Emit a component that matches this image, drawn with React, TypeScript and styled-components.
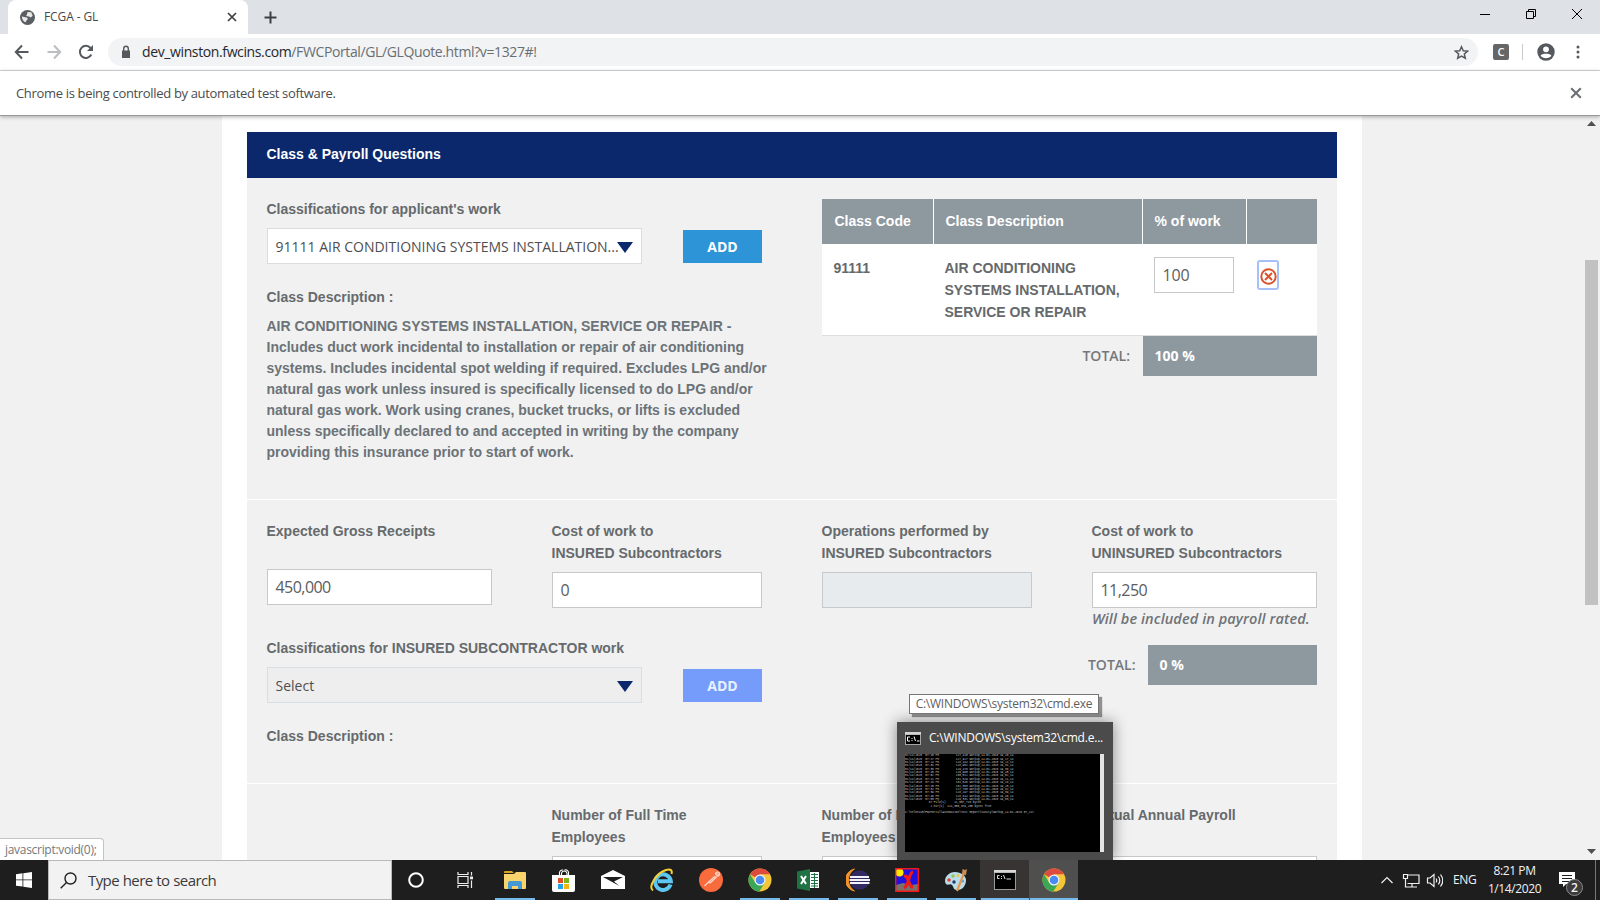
import React from "react";
import styled, { createGlobalStyle, css } from "styled-components";

const Global = createGlobalStyle`
  * { box-sizing: border-box; }
  body { margin: 0; overflow: hidden; font-family: "Liberation Sans", Arial, sans-serif; }
`;
const SANS = `"Open Sans", "Noto Sans", sans-serif`;

const Screen = styled.div`
  position: relative;
  width: 1600px;
  height: 900px;
  display: flex;
  flex-direction: column;
  background: #f1f1f1;
  overflow: hidden;
`;

/* ---------- browser chrome ---------- */
const TabStrip = styled.div`
  flex: none;
  height: 34px;
  background: #dee1e6;
  display: flex;
  align-items: stretch;
  padding-left: 8px;
`;
const Tab = styled.div`
  width: 240px;
  background: #fff;
  border-radius: 8px 8px 0 0;
  display: flex;
  align-items: center;
  padding: 0 11px 0 12px;
  font: 12px/16px ${SANS};
  color: #45494d;
`;
const TabTitle = styled.span`
  flex: 1;
  margin-left: 9px;
  letter-spacing: -0.1px;
`;
const NewTab = styled.div`
  width: 44px;
  display: flex;
  align-items: center;
  justify-content: center;
`;
const WindowButtons = styled.div`
  margin-left: auto;
  display: flex;
  width: 138px;
  align-items: flex-start;
  padding-top: 7px;
  svg { flex: 1; height: 14px; }
`;
const Toolbar = styled.div`
  flex: none;
  height: 37px;
  background: #fff;
  border-bottom: 1px solid #d5d7da;
  display: flex;
  align-items: center;
  padding: 0 16px 0 14px;
`;
const NavIcons = styled.div`
  display: flex;
  gap: 16px;
  margin-right: 14px;
`;
const Omnibox = styled.div`
  width: 1370px;
  height: 28px;
  border-radius: 14px;
  background: #f1f3f4;
  display: flex;
  align-items: center;
  padding: 0 9.5px 0 11px;
  font: 14px/20px ${SANS};
  color: #6a6e73;
`;
const Url = styled.span`
  flex: 1;
  margin-left: 9px;
  letter-spacing: -0.38px;
  b { font-weight: 400; color: #26282b; }
`;
const ExtIcon = styled.div`
  margin-left: 15px;
  width: 16px;
  height: 16px;
  border-radius: 2px;
  background: #666;
  color: #fff;
  font: 600 11px/16px ${SANS};
  text-align: center;
`;
const ToolDivider = styled.div`
  width: 1px;
  height: 16px;
  margin: 0 14px 0 13px;
  background: #c9cbce;
`;
const Menu = styled.svg`
  margin-left: auto;
`;
const InfoBar = styled.div`
  flex: none;
  position: relative;
  z-index: 2;
  height: 45px;
  background: #fff;
  border-bottom: 1px solid #999;
  box-shadow: 0 1px 4px rgba(0, 0, 0, 0.3);
  display: flex;
  align-items: center;
  justify-content: space-between;
  padding: 0 18px 0 16px;
  font: 13px/18px ${SANS};
  letter-spacing: -0.33px;
  color: #4b4b4d;
`;

/* ---------- page ---------- */
const Viewport = styled.div`
  flex: 1;
  min-height: 0;
  display: flex;
  overflow: hidden;
`;
const Gutter = styled.div`
  width: 222px;
  flex: none;
`;
const Sheet = styled.main`
  width: 1140px;
  flex: none;
  background: #fff;
  padding: 16px 25px 0;
`;
const Banner = styled.h2`
  margin: 0;
  height: 46px;
  padding: 0 19.5px;
  background: #0a286b;
  color: #fff;
  font: bold 14px/44px "Liberation Sans", Arial, sans-serif;
`;
const Section = styled.section<{ $h: number }>`
  height: ${(p) => p.$h}px;
  background: #f1f1f1;
  border-bottom: 1px solid #fff;
  padding: 0 20px;
  display: flex;
  flex-direction: column;
`;
const Split = styled.div<{ $top: number }>`
  display: flex;
  justify-content: space-between;
  padding-top: ${(p) => p.$top}px;
`;
const ClassColumn = styled.div`
  width: 506px;
`;
const Label = styled.div<{ $gap?: number }>`
  font-size: 14px;
  font-weight: bold;
  line-height: 22px;
  color: #666a6d;
  white-space: pre-line;
  margin-left: -0.5px;
  margin-bottom: ${(p) => p.$gap ?? 8}px;
`;
const PickRow = styled.div`
  display: flex;
  align-items: center;
  gap: 41px;
  margin-bottom: 22px;
`;
const Select = styled.div<{ $off?: boolean }>`
  width: 375px;
  height: 36px;
  border: 1px solid ${(p) => (p.$off ? "#d9dee2" : "#dcdcdc")};
  background: ${(p) => (p.$off ? "#eee" : "#fff")};
  color: #4e4e50;
  font: 14px/34px ${SANS};
  padding: 1px 8px 0 7.5px;
  display: flex;
  align-items: center;
  justify-content: space-between;
  white-space: nowrap;
`;
const Picked = styled.span`
  flex: 1;
  min-width: 0;
`;
const Caret = styled.span`
  flex: none;
  margin-top: 2px;
  border: 8px solid transparent;
  border-top: 11px solid #0a286b;
  border-bottom: 0;
`;
const AddButton = styled.div<{ $off?: boolean }>`
  width: 79px;
  height: 33px;
  margin-top: 1px;
  background: ${(p) => (p.$off ? "#769cfb" : "#2d94d8")};
  color: ${(p) => (p.$off ? "#e9f0ff" : "#fff")};
  font: 700 14px/33px ${SANS};
  text-align: center;
`;
const Description = styled.p`
  margin: 0 0 0 -0.5px;
  font-size: 14px;
  font-weight: bold;
  line-height: 21px;
  color: #6c7378;
  white-space: pre;
`;
const Table = styled.div`
  width: 495px;
  display: grid;
  grid-template-columns: 112px 209px 104px 70px;
  align-self: flex-start;
  margin-top: 1px;
`;
const Head = styled.div<{ $last?: boolean }>`
  height: 45px;
  background: #8e989f;
  border-right: ${(p) => (p.$last ? "0" : "1px solid #fff")};
  color: #fff;
  font-size: 14px;
  font-weight: bold;
  line-height: 45px;
  padding-left: 11.5px;
  &:first-child { padding-left: 12.5px; }
`;
const Cell = styled.div<{ $left?: number; $top?: number }>`
  height: 92px;
  background: #fff;
  border-bottom: 1px solid #ddd;
  color: #66696b;
  font-size: 14px;
  font-weight: bold;
  line-height: 22px;
  padding: ${(p) => p.$top ?? 13}px 0 0 ${(p) => p.$left ?? 11}px;
  white-space: pre;
`;
const Input = styled.div<{ $w: number; $off?: boolean; $tight?: boolean }>`
  width: ${(p) => p.$w}px;
  height: 36px;
  border: 1px solid ${(p) => (p.$off ? "#c6cacd" : "#c6c8ca")};
  background: ${(p) => (p.$off ? "#e7ebee" : "#fff")};
  font: 16px/34px ${SANS};
  letter-spacing: ${(p) => (p.$tight ? "-0.55px" : "-0.1px")};
  color: #5b5d60;
  padding: 0 7.5px;
`;
const RemoveBox = styled.div`
  width: 22px;
  height: 30px;
  border: 2px solid #a6c1fa;
  border-radius: 3px;
  display: flex;
  align-items: center;
  justify-content: center;
  padding-top: 3px;
`;
const TotalText = styled.div<{ $span?: boolean }>`
  ${(p) => p.$span && "grid-column: span 2;"}
  text-align: right;
  padding-right: ${(p) => (p.$span ? 13 : 12.5)}px;
  font: 600 14px/40px ${SANS};
  color: #74787c;
`;
const TotalBox = styled.div<{ $span?: boolean; $w?: number }>`
  ${(p) => p.$span && "grid-column: span 2;"}
  ${(p) => p.$w && `width: ${p.$w}px;`}
  height: 40px;
  background: #8e989f;
  color: #fff;
  font: 700 14px/40px ${SANS};
  padding-left: 11.5px;
`;
const Fields = styled.div<{ $top: number }>`
  display: grid;
  grid-template-columns: 285px 270px 270px 225px;
  padding-top: ${(p) => p.$top}px;
`;
const Note = styled.div`
  font: italic 600 14.5px/21px ${SANS};
  letter-spacing: 0.09px;
  color: #6f7377;
  white-space: nowrap;
`;
const Bottom = styled.div<{ $top: number }>`
  display: flex;
  justify-content: space-between;
  margin-top: ${(p) => p.$top}px;
`;
const TotalRow = styled.div`
  display: flex;
  margin-top: 8px;
`;
const ScrollBar = styled.div`
  width: 17px;
  margin-left: auto;
  background: #f1f1f1;
  display: flex;
  flex-direction: column;
  align-items: center;
  justify-content: space-between;
  padding: 5px 0 6px;
`;
const Thumb = styled.div`
  width: 13px;
  height: 345px;
  margin-bottom: 110px;
  background: #c1c1c1;
`;

/* ---------- overlays ---------- */
const Status = styled.div`
  position: absolute;
  left: 0;
  top: 838px;
  width: 104px;
  height: 22px;
  background: #fff;
  border: 1px solid #c4c4c4;
  border-width: 1px 1px 0 0;
  border-radius: 0 4px 0 0;
  padding-left: 5px;
  font: 12px/22px ${SANS};
  letter-spacing: -0.3px;
  color: #75787b;
`;
const Tooltip = styled.div`
  position: absolute;
  left: 909px;
  top: 694px;
  width: 190px;
  height: 20px;
  border: 1px solid #767676;
  background: #fff;
  box-shadow: 3px 3px 1px rgba(0, 0, 0, 0.4);
  font: 12px/18px ${SANS};
  letter-spacing: -0.25px;
  color: #606060;
  text-align: center;
  white-space: nowrap;
`;
const Preview = styled.div`
  position: absolute;
  left: 897px;
  top: 722px;
  width: 216px;
  height: 138px;
  background: #4b4b4b;
  box-shadow: 0 0 14px rgba(0, 0, 0, 0.45);
  padding: 0 8px;
`;
const PreviewTitle = styled.div`
  height: 32px;
  display: flex;
  align-items: center;
  gap: 8px;
  color: #fff;
  font: 12px/32px ${SANS};
  letter-spacing: -0.21px;
  white-space: nowrap;
`;
const Console = styled.div`
  position: relative;
  width: 199px;
  height: 98px;
  background: #000;
  border-right: 4px solid #e4e4e4;
  overflow: hidden;
`;
const ConsoleText = styled.pre`
  margin: 0;
  width: 800px;
  transform: scale(0.25);
  transform-origin: 0 0;
  color: #c8c8c8;
  font: 11.3px/13.4px "Liberation Mono", monospace;
`;

/* ---------- taskbar ---------- */
const Taskbar = styled.div`
  position: relative;
  z-index: 3;
  flex: none;
  height: 40px;
  background: #1e1e1e;
  display: flex;
`;
const Start = styled.div`
  width: 48px;
  display: flex;
  align-items: center;
  justify-content: center;
`;
const Search = styled.div`
  width: 344px;
  background: #f2f2f2;
  border: 1px solid #b8b8b8;
  display: flex;
  align-items: center;
  padding-left: 11px;
  gap: 11px;
  font: 15px/38px ${SANS};
  letter-spacing: -0.6px;
  word-spacing: 0.5px;
  color: #3a3a3c;
`;
const TaskItem = styled.div<{ $bg?: string; $line?: "short" | "full" }>`
  width: 49px;
  display: flex;
  align-items: center;
  justify-content: center;
  background-color: ${(p) => p.$bg ?? "transparent"};
  ${(p) =>
    p.$line &&
    css`
      background-image: linear-gradient(#76b9ed, #76b9ed);
      background-repeat: no-repeat;
      background-position: center bottom;
      background-size: ${p.$line === "full" ? "48px" : "40px"} 2px;
    `}
`;
const Tray = styled.div`
  margin-left: auto;
  display: flex;
  align-items: center;
  color: #f2f2f2;
  font: 12px/18px ${SANS};
`;
const Lang = styled.span`
  width: 42px;
  padding-left: 10px;
  letter-spacing: -0.3px;
`;
const Clock = styled.div`
  width: 59px;
  text-align: center;
  letter-spacing: -0.4px;
`;
const Notices = styled.div`
  position: relative;
  width: 52px;
  height: 40px;
  padding: 12px 0 0 15px;
  border-right: 1px solid #777;
  margin-right: 4px;
`;
const Count = styled.span`
  position: absolute;
  left: 22px;
  top: 19px;
  width: 17px;
  height: 17px;
  border-radius: 50%;
  border: 1px solid #8a8a8a;
  background: #3b3b3b;
  font: 600 12px/15px ${SANS};
  text-align: center;
`;

const Cross = ({ s, w, c }: { s: number; w: number; c: string }) => (
  <svg width={s} height={s} viewBox="0 0 10 10" stroke={c} strokeWidth={w}>
    <path d="M1 1l8 8M9 1l-8 8" />
  </svg>
);
const Chrome = () => (
  <svg width="24" height="24" viewBox="0 0 24 24">
    <circle cx="12" cy="12" r="11.5" fill="#f3c637" />
    <path d="M12 12L2 6.2A11.5 11.5 0 0 1 22 6.3H12z" fill="#dd4b3e" />
    <path d="M2 6.2A11.5 11.5 0 0 0 11.3 23.5L16.8 14.5 12 12 7.3 14.7z" fill="#3aa757" />
    <circle cx="12" cy="12" r="5.5" fill="#f4f4f4" />
    <circle cx="12" cy="12" r="4.3" fill="#4a8af4" />
  </svg>
);
const Cmd = () => (
  <svg width="22" height="20" viewBox="0 0 22 20">
    <path d="M0 0h22v20H0z" fill="#9a9a9a" />
    <path d="M0 0h22v2.500H0z" fill="#d8d8d8" />
    <path d="M1 3h20v16H1z" fill="#000" />
    <path d="M5.500 5.500H3.500V8.500H5.500M7.500 6v1M7.500 8v1M9.500 5l1.500 4M12.500 9h4.500" stroke="#ddd" fill="none" />
  </svg>
);
const SmallCmd = () => (
  <svg width="16" height="13" viewBox="0 0 16 13">
    <path d="M0 0h16v13H0z" fill="#a5a5a5" />
    <path d="M0 0h16v2.500H0z" fill="#d4d4d4" />
    <path d="M1 3h14v9H1z" fill="#000" />
    <path d="M5 5H2.500v4H5M7 6v1M7 8v1M9 4.500l1.500 4.500M12 9h2.500" stroke="#fff" fill="none" />
  </svg>
);

const consoleRows = Array.from({ length: 14 }, (_, i) => {
  const n = 127410 + ((i * 5317) % 4800);
  const t = String(10 + ((i * 7) % 48));
  return `01/14/2020  07:${t} PM          ${String(n).replace(/(...)$/, ",$1")} Workup_14-01-2020 19_${t}_14`;
}).join("\n");
const consoleTail = `
              87 File(s)     11,067,710 bytes
               2 Dir(s)  124,355,379,200 bytes free

C:\\Selenium\\FWCPortal\\Automation\\Test Report\\Sanity\\Workup_14-01-2020 07_21>`;

export default function App() {
  return (
    <Screen>
      <Global />
      <TabStrip>
        <Tab>
          <svg width="15" height="15" viewBox="0 0 16 16">
            <circle cx="8" cy="8" r="8" fill="#5a5e63" />
            <path d="M2 7c2 0 3 1 5 1 1 0 2 2 0 3l-1 2c-2 0-4-3-4-6zM8 2l4 .5 1.500 3.500-2 2-2-1-3-.5 1-2z" fill="#e8e8e8" />
          </svg>
          <TabTitle>FCGA - GL</TabTitle>
          <Cross s={10} w={1.7} c="#3c4043" />
        </Tab>
        <NewTab>
          <svg width="13" height="13" viewBox="0 0 13 13" stroke="#3c4043" strokeWidth="2">
            <path d="M6.500 .5v12M.5 6.500h12" />
          </svg>
        </NewTab>
        <WindowButtons>
          <svg viewBox="0 0 14 14" stroke="#000"><path d="M2 7.500h10" /></svg>
          <svg viewBox="0 0 14 14" stroke="#000" fill="none"><path d="M2.500 4.500h7v7h-7zM4.500 4.500v-2h7v7h-2" /></svg>
          <svg viewBox="0 0 14 14" stroke="#000" fill="none"><path d="M2 2l10 10M12 2l-10 10" /></svg>
        </WindowButtons>
      </TabStrip>
      <Toolbar>
        <NavIcons>
          <svg width="16" height="16" viewBox="0 0 16 16" fill="none" stroke="#55595e" strokeWidth="2"><path d="M14.500 8H2M8 1.500L1.800 8 8 14.500" /></svg>
          <svg width="16" height="16" viewBox="0 0 16 16" fill="none" stroke="#bcbec1" strokeWidth="2"><path d="M1.500 8H14M8 1.500L14.200 8 8 14.500" /></svg>
          <svg width="16" height="16" viewBox="0 0 16 16" fill="none" stroke="#55595e" strokeWidth="2"><path d="M13.300 10.500A6 6 0 1 1 12.500 4" /><path d="M15 1v6H9z" fill="#55595e" stroke="none" /></svg>
        </NavIcons>
        <Omnibox>
          <svg width="14" height="14" viewBox="0 0 14 14"><path d="M3 5.500h8v7.500H3z" fill="#55595e" /><path d="M4.700 6V3.500a2.300 2.300 0 0 1 4.600 0V6" fill="none" stroke="#55595e" strokeWidth="1.400" /></svg>
          <Url><b>dev_winston.fwcins.com</b>/FWCPortal/GL/GLQuote.html?v=1327#!</Url>
          <svg width="15" height="15" viewBox="0 0 24 24" fill="none" stroke="#55595e" strokeWidth="2.400"><path d="M12 2.800l2.800 6.400 7 .6-5.300 4.600 1.600 6.800-6.100-3.600-6.100 3.600 1.600-6.800L2.200 9.800l7-.6z" /></svg>
        </Omnibox>
        <ExtIcon>C</ExtIcon>
        <ToolDivider />
        <svg width="18" height="18" viewBox="0 0 18 18"><circle cx="9" cy="9" r="8.700" fill="#55595e" /><circle cx="9" cy="6.300" r="2.900" fill="#fff" /><path d="M3.600 12.800c1-2.600 9.800-2.600 10.800 0-2 3.200-8.800 3.200-10.800 0z" fill="#fff" /></svg>
        <Menu width="12" height="14" viewBox="0 0 12 14" fill="#55595e"><circle cx="6" cy="2" r="1.500" /><circle cx="6" cy="7" r="1.500" /><circle cx="6" cy="12" r="1.500" /></Menu>
      </Toolbar>
      <InfoBar>
        <span>Chrome is being controlled by automated test software.</span>
        <Cross s={12} w={1.7} c="#6b6e72" />
      </InfoBar>

      <Viewport>
        <Gutter />
        <Sheet>
          <Banner>Class &amp; Payroll Questions</Banner>
          <Section $h={322}>
            <Split $top={20}>
              <ClassColumn>
                <Label>Classifications for applicant's work</Label>
                <PickRow>
                  <Select>
                    <Picked>91111 AIR CONDITIONING SYSTEMS INSTALLATION...</Picked>
                    <Caret />
                  </Select>
                  <AddButton>ADD</AddButton>
                </PickRow>
                <Label>Class Description :</Label>
                <Description>{`AIR CONDITIONING SYSTEMS INSTALLATION, SERVICE OR REPAIR -
Includes duct work incidental to installation or repair of air conditioning
systems. Includes incidental spot welding if required. Excludes LPG and/or
natural gas work unless insured is specifically licensed to do LPG and/or
natural gas work. Work using cranes, bucket trucks, or lifts is excluded
unless specifically declared to and accepted in writing by the company
providing this insurance prior to start of work.`}</Description>
              </ClassColumn>
              <Table>
                <Head>Class Code</Head>
                <Head>Class Description</Head>
                <Head>% of work</Head>
                <Head $last />
                <Cell $left={11.5}>91111</Cell>
                <Cell $left={10.5}>{"AIR CONDITIONING\nSYSTEMS INSTALLATION,\nSERVICE OR REPAIR"}</Cell>
                <Cell>
                  <Input $w={80}>100</Input>
                </Cell>
                <Cell $top={16} $left={10}>
                  <RemoveBox>
                    <svg width="17" height="17" viewBox="0 0 17 17" fill="none" stroke="#d9532c" strokeWidth="2"><circle cx="8.500" cy="8.500" r="7.200" /><path d="M5 5l7 7M12 5l-7 7" /></svg>
                  </RemoveBox>
                </Cell>
                <TotalText $span>TOTAL:</TotalText>
                <TotalBox $span>100 %</TotalBox>
              </Table>
            </Split>
          </Section>
          <Section $h={284}>
            <Fields $top={20}>
              <div>
                <Label $gap={27}>Expected Gross Receipts</Label>
                <Input $w={225} $tight>450,000</Input>
              </div>
              <div>
                <Label>{"Cost of work to\nINSURED Subcontractors"}</Label>
                <Input $w={210}>0</Input>
              </div>
              <div>
                <Label>{"Operations performed by\nINSURED Subcontractors"}</Label>
                <Input $w={210} $off />
              </div>
              <div>
                <Label>{"Cost of work to\nUNINSURED Subcontractors"}</Label>
                <Input $w={225} $tight>11,250</Input>
                <Note>Will be included in payroll rated.</Note>
              </div>
            </Fields>
            <Bottom $top={8}>
              <ClassColumn>
                <Label>Classifications for INSURED SUBCONTRACTOR work</Label>
                <PickRow>
                  <Select $off>
                    <Picked>Select</Picked>
                    <Caret />
                  </Select>
                  <AddButton $off>ADD</AddButton>
                </PickRow>
                <Label>Class Description :</Label>
              </ClassColumn>
              <TotalRow>
                <TotalText>TOTAL:</TotalText>
                <TotalBox $w={169}>0 %</TotalBox>
              </TotalRow>
            </Bottom>
          </Section>
          <Section $h={200}>
            <Fields $top={20}>
              <div />
              <div>
                <Label>{"Number of Full Time\nEmployees"}</Label>
                <Input $w={210} />
              </div>
              <div>
                <Label>{"Number of Part Time\nEmployees"}</Label>
                <Input $w={210} />
              </div>
              <div>
                <Label $gap={30}>Actual Annual Payroll</Label>
                <Input $w={225} />
              </div>
            </Fields>
          </Section>
        </Sheet>
        <ScrollBar>
          <svg width="9" height="5" viewBox="0 0 9 5"><path d="M4.500 0L9 5H0z" fill="#505050" /></svg>
          <Thumb />
          <svg width="9" height="5" viewBox="0 0 9 5"><path d="M4.500 5L0 0h9z" fill="#505050" /></svg>
        </ScrollBar>
      </Viewport>

      <Status>javascript:void(0);</Status>
      <Preview>
        <PreviewTitle>
          <SmallCmd />
          <span>C:\WINDOWS\system32\cmd.e...</span>
        </PreviewTitle>
        <Console>
          <ConsoleText>{consoleRows + consoleTail}</ConsoleText>
        </Console>
      </Preview>
      <Tooltip>C:\WINDOWS\system32\cmd.exe</Tooltip>

      <Taskbar>
        <Start>
          <svg width="16" height="16" viewBox="0 0 16 16" fill="#fff"><path d="M0 2.200L6.500 1.300V7.500H0zM7.300 1.200L16 0V7.500H7.300zM0 8.300h6.500v6.300L0 13.700zM7.300 8.300H16V16l-8.700-1.200z" /></svg>
        </Start>
        <Search>
          <svg width="17" height="17" viewBox="0 0 17 17" fill="none" stroke="#222" strokeWidth="1.400"><circle cx="10.500" cy="6.500" r="5.500" /><path d="M6.500 10.500L.7 16.300" /></svg>
          <span>Type here to search</span>
        </Search>
        <TaskItem>
          <svg width="17" height="16" viewBox="0 0 17 16"><circle cx="8" cy="8" r="6.800" fill="none" stroke="#fff" strokeWidth="2" /></svg>
        </TaskItem>
        <TaskItem>
          <svg width="17" height="16" viewBox="0 0 17 16" fill="none" stroke="#eee" strokeWidth="1.200"><path d="M1 0v2.500h10V0M1 16v-2.500h10V16M1 4.500h10v7H1zM14.500 0v3.500M14.500 8.500V16" /><path d="M13 4.500h3v2.800h-3z" fill="#eee" stroke="none" /></svg>
        </TaskItem>
        <TaskItem $line="short">
          <svg width="22" height="18" viewBox="0 0 22 18"><path d="M0 1q0-1 1-1h7l2 2H0z" fill="#d9a520" /><path d="M0 3h10l2-2h9q1 0 1 1v15q0 1-1 1H1q-1 0-1-1z" fill="#f9d36b" /><path d="M4 18v-6q0-2 2-2h10q2 0 2 2v6h-4v-3H8v3z" fill="#4299d6" /></svg>
        </TaskItem>
        <TaskItem>
          <svg width="23" height="23" viewBox="0 0 23 23"><path d="M7.500 7V4.500a3 3 0 0 1 3.500-3.500M9.500 7V4.500a2.800 3 0 0 1 5.500 0V7M12.500 1a3 3 0 0 1 4 3.500V7" fill="none" stroke="#fff" strokeWidth="1.100" /><path d="M0 6h23v15q0 2-2 2H2q-2 0-2-2z" fill="#fff" /><path d="M6 9h5v5H6z" fill="#e2502b" /><path d="M12 9h5v5h-5z" fill="#7cb518" /><path d="M6 15h5v5H6z" fill="#25a3e8" /><path d="M12 15h5v5h-5z" fill="#f5b80f" /></svg>
        </TaskItem>
        <TaskItem>
          <svg width="24" height="20" viewBox="0 0 24 20"><path d="M0 6L12 0l12 6v13H0z" fill="#fff" /><path d="M2 7h20l-9 4.500 5.500 4.500z" fill="#1e1e1e" /></svg>
        </TaskItem>
        <TaskItem>
          <svg width="24" height="24" viewBox="0 0 24 24"><path d="M20.500 16.500A7.800 7.800 0 1 1 20.800 13.300H8" fill="none" stroke="#5cc8f2" strokeWidth="4" /><path d="M3 22.500C-2 19 6 5 16 2c5-1.500 6.500.5 5.500 4" fill="none" stroke="#f5cf35" strokeWidth="2" /></svg>
        </TaskItem>
        <TaskItem>
          <svg width="24" height="24" viewBox="0 0 24 24"><circle cx="12" cy="12" r="12" fill="#f76b3c" /><path d="M5.500 18l3.500-3.500M9 14.500l6.500-6 2 .5-6 6zM16.500 6a2 2 0 1 1 2 2z" fill="#fbd9cb" fillOpacity=".5" stroke="#fbd9cb" strokeWidth="1.100" /></svg>
        </TaskItem>
        <TaskItem $line="short"><Chrome /></TaskItem>
        <TaskItem $line="short">
          <svg width="23" height="22" viewBox="0 0 23 22"><path d="M12 3h10v16H12z" fill="#fff" /><path d="M14 5.500h7M14 8.500h7M14 11.500h7M14 14.500h7M14 17h7M17.500 4v15" stroke="#217346" strokeWidth="1.100" /><path d="M0 2.500L13 0v22L0 19.500z" fill="#1f7244" /><path d="M4 7l5 8M9 7l-5 8" stroke="#fff" strokeWidth="2" /></svg>
        </TaskItem>
        <TaskItem $line="short">
          <svg width="24" height="24" viewBox="0 0 24 24"><path d="M8.500 1A11.200 11.200 0 0 0 8.500 23 13 13 0 0 1 8.500 1z" fill="#f0932b" stroke="#f0932b" /><circle cx="13.700" cy="12" r="9.800" fill="#332a63" /><path d="M4 9h19M3.500 12H24M4 15h19.500" stroke="#f4f4f8" strokeWidth="2" /></svg>
        </TaskItem>
        <TaskItem $line="short">
          <svg width="24" height="24" viewBox="0 0 24 24"><path d="M0 0h24v24H0z" fill="#1d12e0" /><path d="M1 17l7-2 8 2 7-1v7H1z" fill="#77736c" /><circle cx="4.500" cy="4.500" r="4" fill="#ffe900" /><path d="M9 8.500c5-2 3 8 9 11M18 4c-5 1-3 13-9 16" stroke="#f01818" strokeWidth="3.200" fill="none" /><path d="M.7 .7h22.600v22.600H.7z" fill="none" stroke="#f01818" strokeWidth="1.400" /></svg>
        </TaskItem>
        <TaskItem $line="short">
          <svg width="24" height="24" viewBox="0 0 24 24"><path d="M11 4C3 4-1 12 2 16c2 2 4-1 6 1s1 5 5 5c6 0 9-5 9-10 0-4-5-8-11-8z" fill="#bcdcea" /><circle cx="5" cy="12" r="1.800" fill="#e5432d" /><circle cx="9" cy="8" r="1.800" fill="#8fc460" /><circle cx="14" cy="7.500" r="1.600" fill="#e3c84d" /><circle cx="10" cy="14" r="1.700" fill="#1d3b6a" /><circle cx="18.500" cy="13" r="1.600" fill="#5c9fd8" /><path d="M20 5l-7 18" stroke="#e39a4d" strokeWidth="2.200" /><path d="M18 6l.5-5 2.500 1 2-1-1 6z" fill="#c78d58" /></svg>
        </TaskItem>
        <TaskItem $bg="#383433" $line="full"><Cmd /></TaskItem>
        <TaskItem $bg="#4f4f4f" $line="full"><Chrome /></TaskItem>
        <Tray>
          <svg width="62" height="20" viewBox="0 0 62 20" fill="none" stroke="#f0f0f0" strokeWidth="1.200">
            <path d="M.5 13l5.500-5.500L11.500 13" />
            <path d="M27 5h11v8.500H26.500M31 13.500v3M27 17h9M22.500 4.500h4v4h-4zM24.500 8.500V17h3" />
            <path d="M46.500 8h2.500l4-3.500v12L49 13h-2.500zM55 8.500q1.500 2 0 4M57.300 6.500q3 4 0 8M59.500 4.500q4.500 6 0 12" />
          </svg>
          <Lang>ENG</Lang>
          <Clock>8:21 PM<br />1/14/2020</Clock>
          <Notices>
            <svg width="16" height="16" viewBox="0 0 16 16"><path d="M0 0h16v12H7l-3 3v-3H0z" fill="#fff" /><path d="M3 3.500h10M3 6.500h10M3 9.500h7" stroke="#1e1e1e" /></svg>
            <Count>2</Count>
          </Notices>
        </Tray>
      </Taskbar>
    </Screen>
  );
}
